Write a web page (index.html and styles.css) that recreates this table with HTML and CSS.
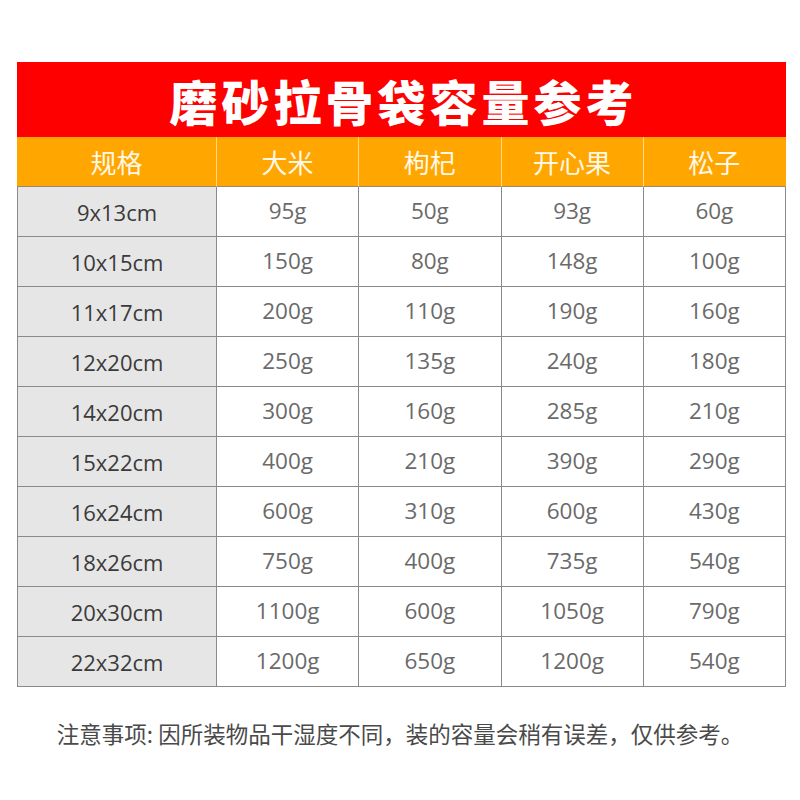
FILE: index.html
```html
<!DOCTYPE html>
<html lang="zh-CN">
<head>
<meta charset="utf-8">
<link rel="stylesheet" href="styles.css">
</head>
<body>
<div class="page">
  <div class="table">
    <div class="title">磨砂拉骨袋容量参考</div>
    <div class="grid">
      <div class="hd">规格</div><div class="hd">大米</div><div class="hd">枸杞</div><div class="hd">开心果</div><div class="hd last">松子</div>

      <div class="sz">9x13cm</div><div class="v">95g</div><div class="v">50g</div><div class="v">93g</div><div class="v">60g</div>
      <div class="sz">10x15cm</div><div class="v">150g</div><div class="v">80g</div><div class="v">148g</div><div class="v">100g</div>
      <div class="sz">11x17cm</div><div class="v">200g</div><div class="v">110g</div><div class="v">190g</div><div class="v">160g</div>
      <div class="sz">12x20cm</div><div class="v">250g</div><div class="v">135g</div><div class="v">240g</div><div class="v">180g</div>
      <div class="sz">14x20cm</div><div class="v">300g</div><div class="v">160g</div><div class="v">285g</div><div class="v">210g</div>
      <div class="sz">15x22cm</div><div class="v">400g</div><div class="v">210g</div><div class="v">390g</div><div class="v">290g</div>
      <div class="sz">16x24cm</div><div class="v">600g</div><div class="v">310g</div><div class="v">600g</div><div class="v">430g</div>
      <div class="sz">18x26cm</div><div class="v">750g</div><div class="v">400g</div><div class="v">735g</div><div class="v">540g</div>
      <div class="sz">20x30cm</div><div class="v">1100g</div><div class="v">600g</div><div class="v">1050g</div><div class="v">790g</div>
      <div class="sz">22x32cm</div><div class="v">1200g</div><div class="v">650g</div><div class="v">1200g</div><div class="v">540g</div>
    </div>
  </div>
  <p class="note">注意事项: 因所装物品干湿度不同，装的容量会稍有误差，仅供参考。</p>
</div>
</body>
</html>
```
FILE: styles.css
```css
html, body {
  margin: 0;
  padding: 0;
  background: #ffffff;
}
.page {
  width: 800px;
  height: 800px;
  padding-top: 62px;
  box-sizing: border-box;
  font-family: "Noto Sans CJK SC", "Noto Sans", sans-serif;
}
.table {
  width: 769px;
  margin-left: 17px;
}
.title {
  height: 75px;
  background: #ff0000;
  color: #ffffff;
  font-size: 48px;
  font-weight: 900;
  letter-spacing: 4px;
  padding-left: 4px;
  display: flex;
  align-items: center;
  justify-content: center;
  line-height: 1;
}
.grid {
  display: grid;
  grid-template-columns: 199px repeat(4, 1fr);
  grid-auto-rows: 50px;
  border-left: 1px solid #8a8a8a;
}
.grid > div {
  display: flex;
  align-items: center;
  justify-content: center;
  border-right: 1px solid #8a8a8a;
  border-bottom: 1px solid #8a8a8a;
  box-sizing: border-box;
  line-height: 1;
}
.grid > .hd {
  background: #ffa600;
  color: #fff8e6;
  font-size: 26px;
  border-right: 1px solid #ffd98a;
  border-bottom: 1px solid #9a8a6a;
}
.grid > .hd.last {
  border-right: 1px solid #ffa600;
}
.grid > .hd:first-child {
  margin-left: -1px;
  border-left: none;
}
.sz {
  background: #e6e6e6;
  color: #3a3a3a;
  font-size: 22px;
  font-family: "Open Sans", "Noto Sans CJK SC", sans-serif;
}
.v {
  background: #ffffff;
  color: #6a6a6a;
  font-size: 22.5px;
  font-family: "Open Sans", "Noto Sans CJK SC", sans-serif;
}
.note {
  margin: 31px 0 0 0;
  text-align: center;
  font-size: 22.5px;
  color: #4a4a4a;
  line-height: 1.4;
}
```
